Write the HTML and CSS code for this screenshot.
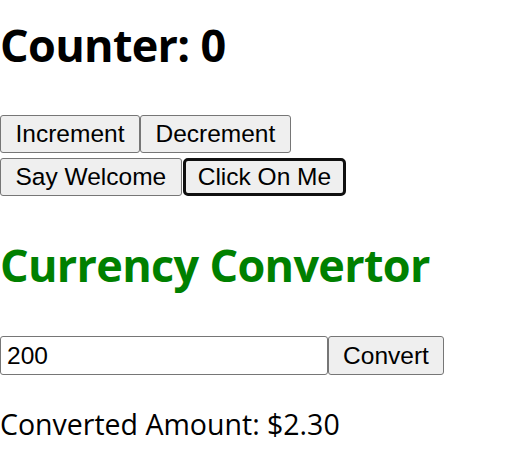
FILE: index.html
```html
<!DOCTYPE html>
<html>
<head>
<meta charset="utf-8">
<link rel="stylesheet" href="styles.css">
</head>
<body>
<div class="app">
  <h1 class="heading counter">Counter: 0</h1>
  <div class="btn-row first">
    <button class="btn">Increment</button><button class="btn">Decrement</button>
  </div>
  <div class="btn-row second">
    <button class="btn">Say Welcome</button><button class="btn focused">Click On Me</button>
  </div>
  <h1 class="heading title">Currency Convertor</h1>
  <div class="convert-row">
    <input class="amount" type="text" value="200"><button class="btn convert">Convert</button>
  </div>
  <p class="result">Converted Amount: $2.30</p>
</div>
</body>
</html>
```

FILE: styles.css
```css
html, body {
  margin: 0;
  padding: 0;
  background: #ffffff;
}

.app {
  font-family: "Open Sans", "Noto Sans", sans-serif;
  color: #000000;
}

.heading {
  font-size: 45px;
  line-height: 64px;
  font-weight: 700;
  margin: 0;
  letter-spacing: -0.7px;
}

.counter {
  margin-top: 13px;
}

.title {
  margin-top: 37px;
  color: #008000;
}

.btn-row {
  display: flex;
  align-items: flex-start;
}

.btn-row.first {
  margin-top: 38px;
}

.btn-row.second {
  margin-top: 5px;
}

.btn {
  font-family: "Liberation Sans", Arial, sans-serif;
  font-size: 24.5px;
  line-height: 28px;
  height: 38px;
  box-sizing: border-box;
  padding: 4px 14.5px;
  border: 1px solid #767676;
  border-radius: 3px;
  background: #efefef;
  color: #000000;
  margin: 0;
}

.btn.focused {
  border: 3px solid #101010;
  border-radius: 5px;
  padding: 2px 12px;
  margin-left: 1px;
  height: 38px;
}

.convert-row {
  display: flex;
  margin-top: 39px;
}

.amount {
  width: 328px;
  height: 39px;
  box-sizing: border-box;
  border: 1px solid #767676;
  border-radius: 3px;
  padding: 2px 6px;
  font-family: "Liberation Sans", Arial, sans-serif;
  font-size: 24.5px;
  color: #000000;
  margin: 0;
}

.btn.convert {
  height: 39px;
  width: 116px;
  padding: 4px 0;
}

.result {
  margin: 30px 0 0;
  font-size: 28.5px;
  line-height: 38px;
  font-weight: 400;
}
```
